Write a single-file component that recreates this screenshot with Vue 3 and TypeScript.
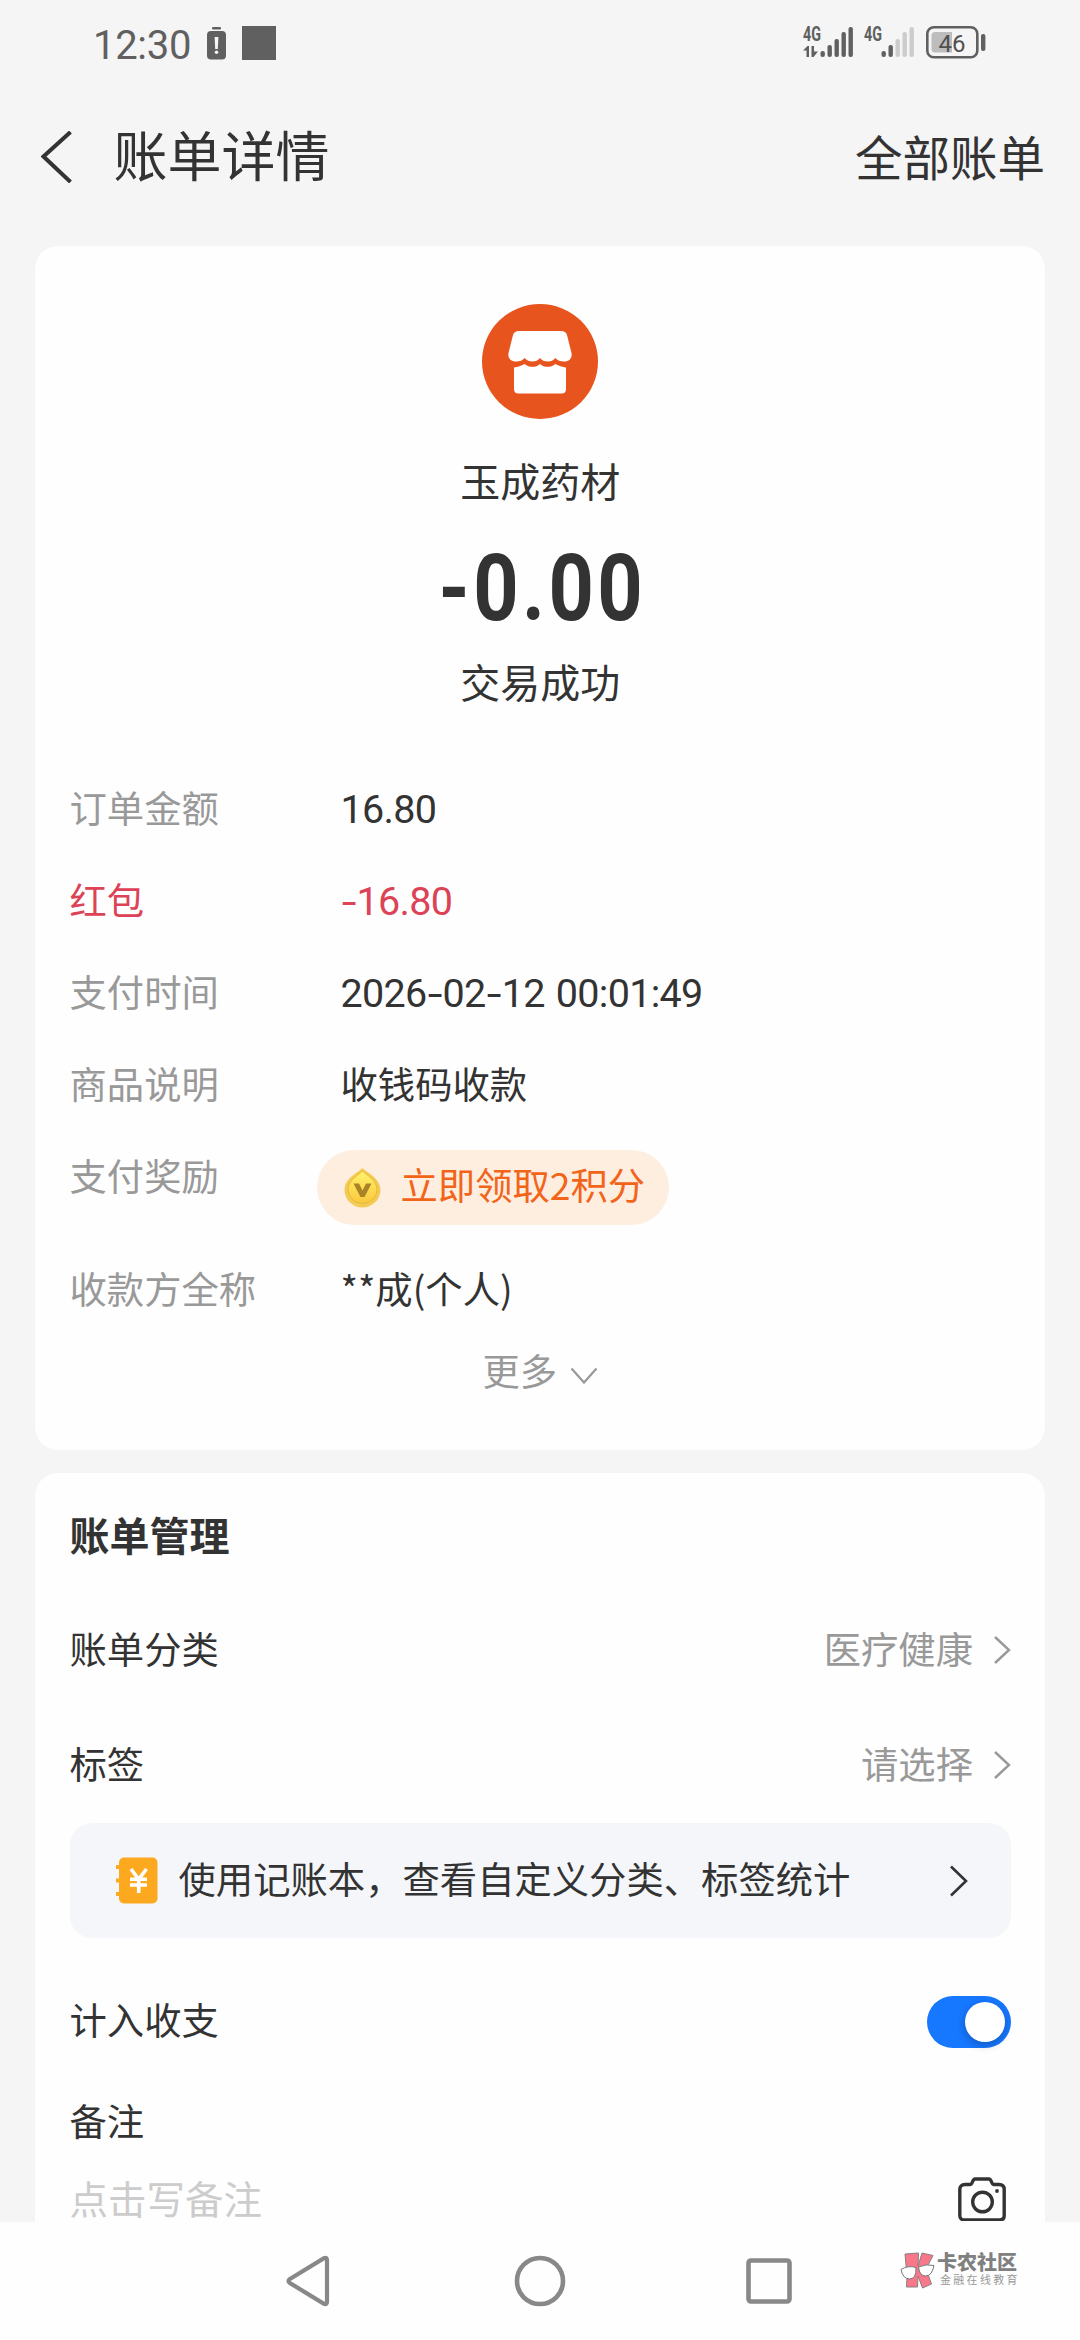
<script setup lang="ts">
import { ref } from 'vue'

interface Detail {
  label: string
  value: string
  numeric?: boolean
  red?: boolean
}

const details: Detail[] = [
  { label: '订单金额', value: '16.80', numeric: true },
  { label: '红包', value: '-16.80', numeric: true, red: true },
  { label: '支付时间', value: '2026-02-12 00:01:49', numeric: true },
  { label: '商品说明', value: '收钱码收款' },
]

const settings = [
  { label: '账单分类', value: '医疗健康' },
  { label: '标签', value: '请选择' },
]

const signals = [
  { data: true, level: 5 },
  { data: false, level: 2 },
]
const barHeights = [6, 12, 18, 25, 30]
const counted = ref(true)

// Hyphens are set wider than the digits' own font draws them.
const parts = (value: string): string[] => value.split(/(-)/).filter(Boolean)
</script>

<template>
  <div class="screen">
    <div class="content">
      <div class="status">
        <span class="clock">12:30</span>
        <svg class="alert" width="19" height="33" viewBox="0 0 19 33">
          <rect x="5" y="0" width="9" height="2.4" rx="1" fill="#606060" />
          <rect x="0" y="4" width="19" height="28.5" rx="4" fill="#606060" />
          <path d="M7.6 10h3.8l-.6 12H8.2z" fill="#f5f5f5" />
          <circle cx="9.5" cy="25.2" r="1.8" fill="#f5f5f5" />
        </svg>
        <span class="block"></span>
        <div class="status-right">
          <svg v-for="(s, i) in signals" :key="i" class="signal" width="51" height="40" viewBox="0 -8 51 40">
            <text x="0" y="14.5" textLength="18" lengthAdjust="spacingAndGlyphs" class="net">4G</text>
            <path v-if="s.data" d="M0 24.5L4.5 20H6v11H3.5v-6.5zM8.5 20H11v5.5h4L10.5 31h-2z" fill="#606060" />
            <rect
              v-for="(h, n) in barHeights"
              :key="n"
              :x="17.5 + n * 7"
              :y="31 - h"
              width="4.4"
              :height="h"
              rx="2"
              :fill="n < s.level ? '#606060' : '#cccccc'"
            />
          </svg>
          <svg class="battery" width="60" height="33" viewBox="0 0 60 33">
            <rect x="1.3" y="1.3" width="50" height="30" rx="6.5" fill="none" stroke="#606060" stroke-width="2.6" />
            <path d="M9 6H26V26.5H9a3.5 3.5 0 0 1-3.5-3.5V9.5A3.5 3.500 0 0 1 9 6z" fill="#bdbdbd" />
            <rect x="55" y="8" width="4.4" height="17" rx="2" fill="#606060" />
            <text x="12.5" y="25.5" textLength="27" lengthAdjust="spacingAndGlyphs" class="percent">46</text>
          </svg>
        </div>
      </div>

      <header class="header">
        <svg width="31" height="52" viewBox="0 0 31 52">
          <path d="M29.5 1L2.5 25.5L29.5 51" fill="none" stroke="#333" stroke-width="4" />
        </svg>
        <h1>账单详情</h1>
        <span class="all">全部账单</span>
      </header>

      <section class="card summary">
        <svg class="shop" width="116" height="115" viewBox="0 0 116 115">
          <ellipse cx="58" cy="57.5" rx="58" ry="57.5" fill="#e8541e" />
          <path
            d="M37 27H79C82 27 84 28 85 31L89.5 49C90.5 54 87 57.5 82.5 57.5C78 57.5 75.5 56.5 73.3 54C71.5 56.5 69 57.5 66 57.5C62.5 57.5 59.8 56.5 58 54C56.2 56.5 53.5 57.5 50.5 57.5C47.5 57.5 44.5 56.5 42.7 54C40.5 56.5 38 57.5 34 57.5C29 57.5 25.5 54 26.5 49L31 31C32 28 34 27 37 27z"
            fill="#fff"
          />
          <path
            d="M32 63.5C36 63 39 62 42.7 60C47 63.8 54 63.8 58 60C62 63.8 69 63.8 73.3 60C77 62 80 63 84 63.5V85C84 88 82.5 89.5 79.5 89.5H36.5C33.5 89.5 32 88 32 85z"
            fill="#fff"
          />
        </svg>
        <div class="merchant">玉成药材</div>
        <div class="amount">-0.00</div>
        <div class="result">交易成功</div>

        <div class="details">
          <div v-for="d in details" :key="d.label" class="row" :class="{ red: d.red }">
            <span class="label">{{ d.label }}</span>
            <span v-if="d.numeric" class="num"><span v-for="(p, i) in parts(d.value)" :key="i" :class="{ dash: p === '-' }">{{ p }}</span></span>
            <span v-else>{{ d.value }}</span>
          </div>
          <div class="row reward">
            <span class="label">支付奖励</span>
            <span class="pill">
              <svg width="37" height="41" viewBox="0 0 37 41">
                <defs>
                  <linearGradient id="coin" x1="0" y1="0" x2="0" y2="1">
                    <stop offset="0" stop-color="#fff36b" />
                    <stop offset="1" stop-color="#fbc73c" />
                  </linearGradient>
                </defs>
                <path d="M18.5 1C22 5 36.5 11 36.5 23A18 17.5 0 0 1 .5 23C.5 11 15 5 18.5 1z" fill="#f3cb54" />
                <path d="M18.5 4C22 7.5 33 13 33 22.5A14.5 14 0 0 1 4 22.5C4 13 15 7.5 18.5 4z" fill="url(#coin)" stroke="#e5b93c" stroke-width="1" />
                <path d="M9.5 16.5H15L18.5 23.5L22 16.5H27.5L20.5 30H16.5z" fill="#a98325" />
              </svg>
              <span>立即领取2积分</span>
            </span>
          </div>
          <div class="row">
            <span class="label">收款方全称</span>
            <span>**成(个人)</span>
          </div>
        </div>
        <div class="more">
          <span>更多</span>
          <svg width="28" height="18" viewBox="0 0 28 18">
            <path d="M1.5 1.5L14 15.5L26.5 1.5" fill="none" stroke="#999" stroke-width="2.2" />
          </svg>
        </div>
      </section>

      <section class="card manage">
        <h2>账单管理</h2>
        <div v-for="s in settings" :key="s.label" class="setting">
          <span>{{ s.label }}</span>
          <span class="pick">{{ s.value }}</span>
          <svg width="18" height="28" viewBox="0 0 18 28">
            <path d="M2 1L16 14L2 27" fill="none" stroke="#999" stroke-width="2.4" />
          </svg>
        </div>
        <div class="banner">
          <svg width="42" height="47" viewBox="0 0 42 47">
            <rect x="3" y="0.5" width="38.5" height="46" rx="5" fill="#fca91f" />
            <path d="M0 8h6v4H0zM0 21.5h6v4H0zM0 35h6v4H0z" fill="#fca91f" />
            <path d="M15 12l7.7 10.300L30.500 12M14 22.300h17M14 28h17M22.700 22v14" fill="none" stroke="#fff" stroke-width="3.600" />
          </svg>
          <span class="tip">使用记账本，查看自定义分类、标签统计</span>
          <svg width="19" height="32" viewBox="0 0 19 32">
            <path d="M2 1.5L17 16L2 30.5" fill="none" stroke="#333" stroke-width="2.6" />
          </svg>
        </div>
        <div class="count">
          <span>计入收支</span>
          <button class="toggle" :class="{ on: counted }" aria-label="计入收支" @click="counted = !counted">
            <i></i>
          </button>
        </div>
        <div class="note-title">备注</div>
        <div class="note">
          <span>点击写备注</span>
          <svg width="48" height="44" viewBox="0 0 48 44">
            <path
              d="M7 7.5H12.5C14.5 7.5 14.5 2 17 2H31C33.5 2 33.5 7.5 35.5 7.5H41C44.5 7.5 46.2 9.5 46.2 12.5V38.5C46.2 41.5 44.5 43 41.5 43H6.5C3.5 43 1.8 41.5 1.8 38.5V12.5C1.8 9.5 3.5 7.5 7 7.5z"
              fill="none"
              stroke="#333"
              stroke-width="3.4"
            />
            <circle cx="24.5" cy="25" r="9.8" fill="none" stroke="#333" stroke-width="3.4" />
            <circle cx="39" cy="14" r="1.9" fill="#333" />
          </svg>
        </div>
      </section>
    </div>

    <nav class="nav">
      <svg width="44" height="52" viewBox="0 0 44 52">
        <path d="M3.5 24.2L38 3.2Q41 2 41 5V47Q41 50 38 48.8L3.5 27.8Q1.5 26 3.5 24.2z" fill="none" stroke="#888" stroke-width="4.2" />
      </svg>
      <svg width="52" height="52" viewBox="0 0 52 52">
        <circle cx="26" cy="26" r="23" fill="none" stroke="#888" stroke-width="4.6" />
      </svg>
      <svg width="46" height="46" viewBox="0 0 46 46">
        <rect x="2.5" y="2.5" width="41" height="41" rx="2.5" fill="none" stroke="#888" stroke-width="4.6" />
      </svg>
      <div class="mark">
        <svg width="35" height="37" viewBox="0 0 35 37">
          <path d="M5 2L18.5 1L18 14L22 1L33 3.5L26 17L31.5 32L22.5 36L18 24L17.5 35H6.5L7 24z" fill="#f8788a" stroke="#8a8080" stroke-width="1" />
          <g fill="#fff" stroke="#777" stroke-width="1">
            <path d="M1 17.5Q8 13 16 15.5Q16.5 27 9.5 27Q3 27 1 17.5z" />
            <path d="M18.5 15Q26 11.5 34 13.5Q32 24 25.5 24Q19.5 24 18.5 15z" />
          </g>
        </svg>
        <div class="mark-text">
          <b>卡农社区</b>
          <small>金融在线教育</small>
        </div>
      </div>
    </nav>
  </div>
</template>

<style>
body {
  margin: 0;
  background: #fdfdfd;
}
</style>

<style scoped>
.screen {
  width: 1080px;
  height: 2340px;
  overflow: hidden;
  background: #fefefe;
  color: #333;
  font-family: 'Noto Sans CJK SC', sans-serif;
  font-size: 37.33px;
  white-space: nowrap;
}
svg {
  display: block;
  flex: none;
}
.content {
  height: 2222px;
  background: #f5f5f5;
}
.status {
  display: flex;
  align-items: flex-start;
  height: 90px;
  padding-left: 93px;
  box-sizing: border-box;
}
.clock {
  width: 114px;
  margin-top: 23px;
  font: 40px/46px Roboto, sans-serif;
  letter-spacing: -0.3px;
  color: #606060;
}
.alert {
  margin-top: 27px;
}
.block {
  width: 34px;
  height: 34px;
  margin: 26px 0 0 16px;
  background: #606060;
}
.status-right {
  display: flex;
  align-items: flex-start;
  margin: 18px 0 0 auto;
  padding-right: 94px;
}
.signal {
  margin-right: 10px;
}
.battery {
  margin: 8px 0 0 1px;
}
.net {
  font: 700 20px Roboto, sans-serif;
  fill: #606060;
}
.percent {
  font: 24px Roboto, sans-serif;
  fill: #505050;
}
.header {
  display: flex;
  align-items: center;
  height: 134px;
  padding: 0 35px 0 41px;
  margin-bottom: 22px;
}
h1 {
  margin: -7px 0 0 41.5px;
  font-size: 54px;
  font-weight: 400;
}
.all {
  margin-left: auto;
  margin-top: -3px;
  font-size: 47.5px;
}
.card {
  width: 1010px;
  margin: 0 auto;
  box-sizing: border-box;
  padding: 0 34px 0 34.5px;
  border-radius: 23px;
  background: #fefefe;
}
.summary {
  height: 1204px;
  display: flex;
  flex-direction: column;
  align-items: center;
  padding-top: 58px;
}
.merchant,
.result {
  font-size: 40px;
  line-height: 60px;
}
.merchant {
  margin-top: 31px;
}
.amount {
  margin-top: 34px;
  height: 90px;
  padding-left: 4px;
  font: 700 92px/90px Roboto, sans-serif;
  letter-spacing: 4px;
  transform: scaleX(0.86);
}
.result {
  margin-top: 17px;
}
.details {
  align-self: stretch;
  margin-top: 50px;
}
.row {
  display: flex;
  height: 92px;
  line-height: 92px;
}
.label {
  width: 271px;
  color: #999;
}
.num {
  padding-top: 3px;
  font-family: Roboto, sans-serif;
  font-size: 39.5px;
  letter-spacing: -0.7px;
  word-spacing: 2px;
  white-space: pre;
}
.dash {
  display: inline-block;
  padding: 0 2.6px;
  letter-spacing: 0;
  transform: scaleX(1.35);
}
.red,
.red .label {
  color: #dc4356;
}
.reward {
  height: 113px;
}
.pill {
  display: flex;
  align-items: center;
  width: 352px;
  height: 75px;
  box-sizing: border-box;
  margin: 21px 0 0 -24px;
  padding-left: 27px;
  border-radius: 38px;
  background: #feeee0;
  color: #f26419;
  line-height: 71px;
}
.pill span {
  margin: -6px 0 0 20px;
}
.more {
  display: flex;
  align-items: center;
  height: 72px;
  color: #999;
}
.more svg {
  margin: 11px 0 0 13px;
}
.manage {
  height: 749px;
  margin-top: 23px;
  padding-top: 31px;
  border-radius: 23px 23px 0 0;
}
h2 {
  margin: 0 0 26px;
  font-size: 40px;
  line-height: 60px;
  font-weight: 700;
}
.setting {
  display: flex;
  align-items: center;
  height: 115px;
}
.pick {
  margin: 0 20px 0 auto;
  color: #999;
}
.setting svg {
  margin-top: 5px;
}
.banner {
  display: flex;
  align-items: center;
  height: 115px;
  box-sizing: border-box;
  margin-top: 3px;
  padding: 0 43px 0 46px;
  border-radius: 22px;
  background: #f5f6fa;
}
.tip {
  margin: -5px auto 0 21px;
}
.count {
  display: flex;
  align-items: center;
  justify-content: space-between;
  height: 80px;
  margin-top: 41px;
}
.toggle {
  display: flex;
  width: 84px;
  height: 52px;
  padding: 6px;
  margin-top: 6px;
  border: 0;
  border-radius: 26px;
  background: #ccc;
}
.toggle.on {
  justify-content: flex-end;
  background: #1677ff;
}
.toggle i {
  width: 40px;
  height: 40px;
  border-radius: 50%;
  background: #fff;
  box-shadow: 0 3px 8px rgba(0, 0, 0, 0.25);
}
.note-title {
  margin-top: 31px;
  line-height: 60px;
}
.note {
  display: flex;
  align-items: flex-start;
  justify-content: space-between;
  margin-top: 17px;
  padding-right: 5px;
  font-size: 38.5px;
  line-height: 60px;
  color: #ccc;
}
.note svg {
  margin-top: 10px;
}
.nav {
  display: flex;
  align-items: center;
  height: 118px;
  padding-left: 286px;
}
.nav > svg:nth-child(2) {
  margin-left: 184px;
}
.nav > svg:nth-child(3) {
  margin-left: 180px;
}
.mark {
  display: flex;
  margin: -22px 0 0 108px;
}
.mark-text {
  display: flex;
  flex-direction: column;
  margin-left: 2px;
  color: #808080;
}
.mark-text b {
  font-size: 20px;
  line-height: 20px;
  font-weight: 900;
}
.mark-text small {
  margin: 0 0 0 3px;
  font-size: 11px;
  line-height: 14px;
  letter-spacing: 2.3px;
  color: #999;
}
</style>
